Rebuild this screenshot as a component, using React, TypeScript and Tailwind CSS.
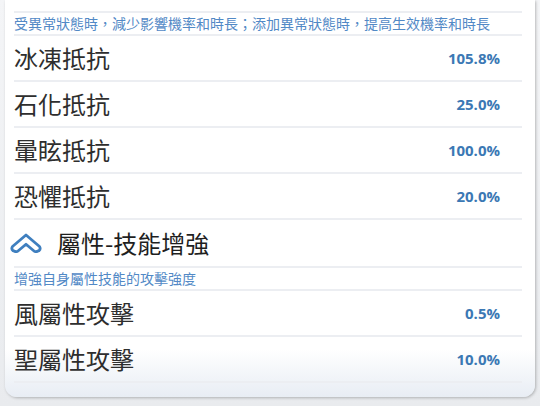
import React from "react";

type Stat = { label: string; value: string };

const resist: Stat[] = [
  { label: "冰凍抵抗", value: "105.8%" },
  { label: "石化抵抗", value: "25.0%" },
  { label: "暈眩抵抗", value: "100.0%" },
  { label: "恐懼抵抗", value: "20.0%" },
];

const element: Stat[] = [
  { label: "風屬性攻擊", value: "0.5%" },
  { label: "聖屬性攻擊", value: "10.0%" },
];

const cjk = { fontFamily: '"Noto Sans CJK TC", "Noto Sans", sans-serif' };
const num = { fontFamily: '"Open Sans", "Liberation Sans", sans-serif' };

const Line = () => <div className="h-[2px] bg-[#eceef2]" />;

const Desc = ({ text }: { text: string }) => (
  <div className="flex h-[21px] items-center whitespace-nowrap text-[14px] text-[#5289c6]" style={cjk}>
    {text}
  </div>
);

const Row = ({ s }: { s: Stat }) => (
  <div className="flex h-[44px] items-center justify-between pr-[22px]">
    <span className="text-[24px] leading-none text-[#2e2e2e]" style={cjk}>
      {s.label}
    </span>
    <span className="text-[15px] font-bold text-[#3b78b4]" style={num}>
      {s.value}
    </span>
  </div>
);

const Chevron = () => (
  <svg width="32" height="21" viewBox="0 0 32 21">
    <path
      d="M16 2 L29.5 13.5 Q31 15.8 29 17.6 L26.5 18.6 Q25 19 24 18 L16 11.2 L8 18 Q7 19 5.5 18.6 L3 17.6 Q1 15.8 2.5 13.5 Z"
      fill="#ffffff"
      stroke="#3f7fbf"
      strokeWidth="2.8"
      strokeLinejoin="round"
    />
  </svg>
);

export default function App() {
  return (
    <div className="h-[406px] w-[540px] overflow-hidden bg-gradient-to-b from-[#f4f5f7] to-[#e9ebee]">
      <div className="ml-[5px] w-[530px]">
        <div className="rounded-b-[12px] bg-gradient-to-b from-white from-[88%] to-[#e8edf4] pb-[14px] pl-[9px] pr-[13px] pt-[11px] shadow-[1px_1px_3px_rgba(0,0,0,0.25)]">
          <Line />
          <Desc text="受異常狀態時，減少影響機率和時長；添加異常狀態時，提高生效機率和時長" />
          <Line />
          {resist.map((s) => (
            <React.Fragment key={s.label}>
              <Row s={s} />
              <Line />
            </React.Fragment>
          ))}
          <div className="flex h-[46px] items-center">
            <div className="ml-[-4px] mr-[15px] flex items-center">
              <Chevron />
            </div>
            <span className="text-[24px] leading-none text-[#1f1f1f]" style={cjk}>
              屬性-技能增強
            </span>
          </div>
          <Line />
          <Desc text="增強自身屬性技能的攻擊強度" />
          <Line />
          {element.map((s) => (
            <React.Fragment key={s.label}>
              <Row s={s} />
              <Line />
            </React.Fragment>
          ))}
        </div>
      </div>
    </div>
  );
}
